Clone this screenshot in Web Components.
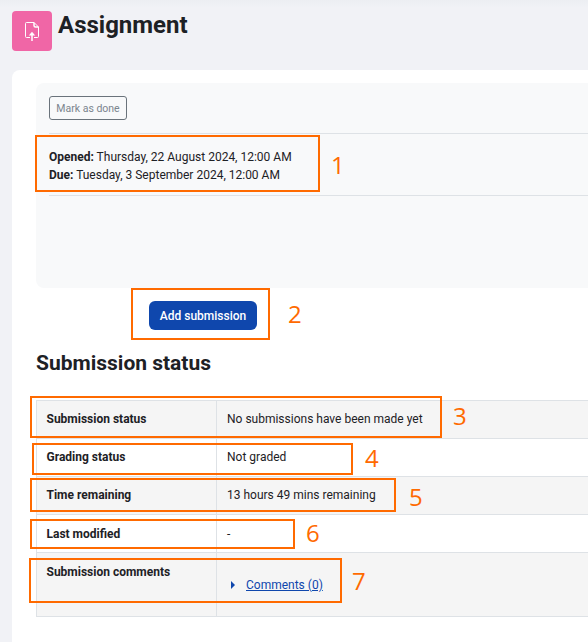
<!DOCTYPE html>
<html lang="en">
<head>
<meta charset="utf-8">
<title>Assignment</title>
<style>
    html, body { margin: 0; padding: 0; height: 642px; overflow: hidden; }
    body { font-family: Roboto, "Liberation Sans", sans-serif; color: #1d2125; background: #f1f2f6; }
</style>
</head>
<body>
<assign-page>
    <page-header slot="header">Assignment</page-header>
    <activity-box>
        <date-line label="Opened:">Thursday, 22 August 2024, 12:00 AM</date-line>
        <date-line label="Due:">Tuesday, 3 September 2024, 12:00 AM</date-line>
    </activity-box>
    <add-button>Add submission</add-button>
    <status-table title="Submission status">
        <status-row label="Submission status" shade>No submissions have been made yet</status-row>
        <status-row label="Grading status">Not graded</status-row>
        <status-row label="Time remaining" shade>13 hours 49 mins remaining</status-row>
        <status-row label="Last modified" low>-</status-row>
        <status-row label="Submission comments" shade tall><comment-link>Comments (0)</comment-link></status-row>
    </status-table>
</assign-page>
<note-mark n="1" box="35,135,285,57" at="331,147"></note-mark>
<note-mark n="2" box="131,288,139,52" at="288,296"></note-mark>
<note-mark n="3" box="30,396,412,42" at="453,398"></note-mark>
<note-mark n="4" box="32,443,321,32" at="365,440"></note-mark>
<note-mark n="5" box="30,478,366,34" at="409,479"></note-mark>
<note-mark n="6" box="30,519,265,30" at="306,515"></note-mark>
<note-mark n="7" box="29,558,313,45" at="352,563"></note-mark>

<script>
class AssignPage extends HTMLElement {
    constructor() {
        super();
        this.attachShadow({ mode: 'open' });
    }

    connectedCallback() {
        this.shadowRoot.innerHTML = `
            <style>
                :host {
                    display: block;
                    height: 642px;
                    background: linear-gradient(#eceef2, #f1f2f6 8px);
                }
                .card {
                    margin-left: 12px;
                    height: 572px;
                    padding: 13px 0 0 24px;
                    box-sizing: border-box;
                    background: #fff;
                    border-radius: 8px 0 0 0;
                }
            </style>
            <slot name="header"></slot>
            <div class="card"><slot></slot></div>
        `;
    }
}

class PageHeader extends HTMLElement {
    constructor() {
        super();
        this.attachShadow({ mode: 'open' });
    }

    connectedCallback() {
        this.shadowRoot.innerHTML = `
            <style>
                :host {
                    display: flex;
                    gap: 6px;
                    height: 70px;
                    padding: 11px 0 0 12px;
                    box-sizing: border-box;
                }
                .icon {
                    display: flex;
                    align-items: center;
                    justify-content: center;
                    width: 40px;
                    height: 40px;
                    background: #f066a6;
                    border-radius: 4px;
                }
                h1 {
                    margin: 0;
                    font-size: 24px;
                    line-height: 28px;
                    font-weight: 700;
                    color: #1d2125;
                }
            </style>
            <div class="icon">
                <svg width="16" height="20" viewBox="0 0 16 20" fill="none" stroke="#fff" stroke-width="1">
                    <path d="M6 16.5H2.5a1 1 0 0 1-1-1V2.500a1 1 0 0 1 1-1h7.500l4.500 4.500v9.500a1 1 0 0 1-1 1H10"/>
                    <path d="M10 1.500v3a1.500 1.500 0 0 0 1.500 1.500h3" stroke-width="1.500"/>
                    <path d="M8 20v-8" stroke-width="1.500"/>
                    <path d="M4.800 14.500L8 10.800l3.200 3.700z" fill="#fff" stroke="none"/>
                </svg>
            </div>
            <h1><slot></slot></h1>
        `;
    }
}

class ActivityBox extends HTMLElement {
    constructor() {
        super();
        this.attachShadow({ mode: 'open' });
    }

    connectedCallback() {
        this.shadowRoot.innerHTML = `
            <style>
                :host {
                    display: block;
                    height: 205px;
                    padding: 13px 0 0 13px;
                    box-sizing: border-box;
                    background: #f8f9fa;
                    border-radius: 8px 0 0 8px;
                }
                button {
                    display: block;
                    width: 78px;
                    height: 24px;
                    padding: 0;
                    font: 400 10.500px Roboto, sans-serif;
                    color: #7b858e;
                    background: transparent;
                    border: 1px solid #6a737b;
                    border-radius: 3px;
                }
                .dates {
                    margin-top: 13px;
                    height: 63px;
                    padding-top: 14px;
                    box-sizing: border-box;
                    border-top: 1px solid #dee2e6;
                    border-bottom: 1px solid #dee2e6;
                }
            </style>
            <button>Mark as done</button>
            <div class="dates"><slot></slot></div>
        `;
    }
}

class DateLine extends HTMLElement {
    constructor() {
        super();
        this.attachShadow({ mode: 'open' });
    }

    connectedCallback() {
        this.shadowRoot.innerHTML = `
            <style>
                :host {
                    display: block;
                    font-size: 12px;
                    line-height: 18px;
                    color: #1d2125;
                }
                b { font-weight: 700; }
            </style>
            <b>${this.getAttribute('label')}</b> <slot></slot>
        `;
    }
}

class AddButton extends HTMLElement {
    constructor() {
        super();
        this.attachShadow({ mode: 'open' });
    }

    connectedCallback() {
        this.shadowRoot.innerHTML = `
            <style>
                :host {
                    display: block;
                    padding: 13px 0 0 113px;
                }
                button {
                    display: block;
                    width: 108px;
                    height: 29px;
                    padding: 0;
                    font: 500 12px Roboto, sans-serif;
                    color: #fff;
                    background: #0f47ad;
                    border: 0;
                    border-radius: 6px;
                }
            </style>
            <button><slot></slot></button>
        `;
    }
}

class StatusTable extends HTMLElement {
    constructor() {
        super();
        this.attachShadow({ mode: 'open' });
    }

    connectedCallback() {
        this.shadowRoot.innerHTML = `
            <style>
                :host { display: block; }
                h2 {
                    margin: 0;
                    padding-top: 21px;
                    height: 70px;
                    box-sizing: border-box;
                    font-size: 21px;
                    line-height: 24px;
                    font-weight: 700;
                    color: #1d2125;
                }
                .rows {
                    border-top: 1px solid #dee2e6;
                    border-left: 1px solid #dee2e6;
                }
            </style>
            <h2>${this.getAttribute('title')}</h2>
            <div class="rows"><slot></slot></div>
        `;
    }
}

class StatusRow extends HTMLElement {
    constructor() {
        super();
        this.attachShadow({ mode: 'open' });
    }

    connectedCallback() {
        this.shadowRoot.innerHTML = `
            <style>
                :host {
                    display: grid;
                    grid-template-columns: 180px 1fr;
                    height: 38px;
                    box-sizing: border-box;
                    font-size: 12px;
                    line-height: 18px;
                    color: #1d2125;
                    border-bottom: 1px solid #dee2e6;
                }
                :host([shade]) { background: #f5f5f5; }
                :host([tall]) { height: 64px; }
                .head, .val { padding: 9px 10px 0; }
                .head { padding-left: 9.500px; font-weight: 700; border-right: 1px solid #dee2e6; }
                :host([low]) .head, :host([low]) .val { padding-top: 10px; }
                :host([tall]) .head { padding-top: 10px; }
            </style>
            <div class="head">${this.getAttribute('label')}</div>
            <div class="val"><slot></slot></div>
        `;
    }
}

class CommentLink extends HTMLElement {
    constructor() {
        super();
        this.attachShadow({ mode: 'open' });
    }

    connectedCallback() {
        this.shadowRoot.innerHTML = `
            <style>
                :host {
                    display: flex;
                    align-items: center;
                    gap: 11px;
                    margin: 14px 0 0 4px;
                }
                i {
                    width: 0;
                    height: 0;
                    border-left: 4px solid #0f47ad;
                    border-top: 4px solid transparent;
                    border-bottom: 4px solid transparent;
                }
                a { color: #0f47ad; text-decoration: underline; }
            </style>
            <i></i><a href="#"><slot></slot></a>
        `;
    }
}

// the orange callouts lie over the screenshot, so these are absolute
class NoteMark extends HTMLElement {
    constructor() {
        super();
        this.attachShadow({ mode: 'open' });
    }

    connectedCallback() {
        const [x, y, w, h] = this.getAttribute('box').split(',');
        const [nx, ny] = this.getAttribute('at').split(',');
        this.shadowRoot.innerHTML = `
            <style>
                :host { display: contents; }
                .box {
                    position: absolute;
                    left: ${x}px;
                    top: ${y}px;
                    width: ${w}px;
                    height: ${h}px;
                    box-sizing: border-box;
                    border: 2px solid #ff6a00;
                }
                .num {
                    position: absolute;
                    left: ${nx}px;
                    top: ${ny}px;
                    font: 400 24px/36px "Open Sans", sans-serif;
                    color: #ff6a00;
                }
            </style>
            <div class="box"></div>
            <div class="num">${this.getAttribute('n')}</div>
        `;
    }
}

customElements.define('assign-page', AssignPage);
customElements.define('page-header', PageHeader);
customElements.define('activity-box', ActivityBox);
customElements.define('date-line', DateLine);
customElements.define('add-button', AddButton);
customElements.define('status-table', StatusTable);
customElements.define('status-row', StatusRow);
customElements.define('comment-link', CommentLink);
customElements.define('note-mark', NoteMark);
</script>
</body>
</html>
